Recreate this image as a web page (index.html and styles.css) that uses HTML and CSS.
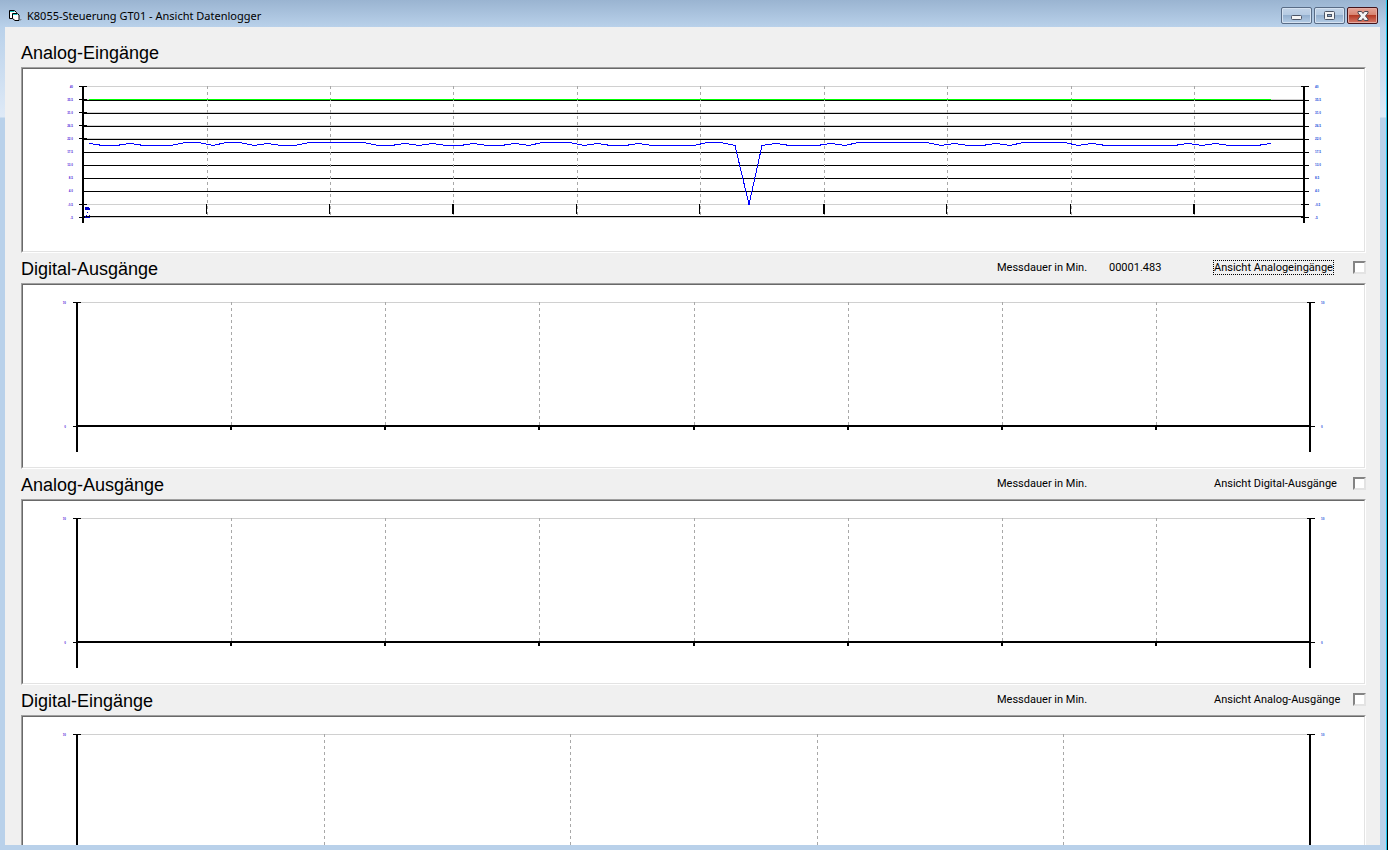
FILE: index.html
```
<!DOCTYPE html>
<html lang="de">
<head>
    <meta charset="UTF-8">
    <meta name="viewport" content="width=device-width, initial-scale=1.0">
    <title>K8055-Steuerung GT01 - Ansicht Datenlogger</title>
    <link rel="stylesheet" href="styles.css">
</head>
<body>
    <div class="window">
        <!-- Title Bar -->
        <header class="titlebar">
            <svg class="app-icon" viewBox="0 0 13 12" width="13" height="12" aria-hidden="true">
                <path d="M.5 8.500V.5h5l2 2v6z" fill="#fff" stroke="#000"/>
                <path d="M1 1h4l1 1H1z" fill="#19c5c5"/>
                <path d="M3.500 8.500v-5h5l1.500 1.500v5.500h-4z" fill="#fff" stroke="#000"/>
                <path d="M4 4h4l1 1H4z" fill="#19c5c5"/>
                <path d="M11 9h2l-2 2z" fill="#7c8794"/>
            </svg>
            <span class="caption">K8055-Steuerung GT01 - Ansicht Datenlogger</span>
            <button class="winbtn minimize" aria-label="Minimieren">
                <svg viewBox="0 0 11 5" width="11" height="5"><rect x=".5" y=".5" width="10" height="4" rx="1" fill="#f4f4f4" stroke="#4c5566"/></svg>
            </button>
            <button class="winbtn" aria-label="Maximieren">
                <svg viewBox="0 0 11 9" width="11" height="9"><rect x=".5" y=".5" width="10" height="8" rx="1" fill="#f4f4f4" stroke="#4c5566"/><rect x="3.5" y="3.5" width="4" height="2" fill="#8fabc9" stroke="#4c5566"/></svg>
            </button>
            <button class="winbtn close" aria-label="Schließen">
                <svg viewBox="0 0 12 10" width="12" height="10"><path d="M1 .5h3.500L6 2.500 7.500 .5H11V2L8.500 5 11 8v1.500H7.500L6 7.500 4.500 9.500H1V8l2.500-3L1 2z" fill="#f4f4f4" stroke="#4b4650"/></svg>
            </button>
        </header>

        <!-- Logger Charts -->
        <main class="client">
            <section>
                <div class="head">
                    <h2>Analog-Eingänge</h2>
                </div>
                <div class="panel"><svg id="analog-in" class="chart" viewBox="0 0 1341 182"></svg></div>
            </section>
            <section>
                <div class="head">
                    <h2>Digital-Ausgänge</h2>
                    <span>Messdauer in Min.</span>
                    <output>00001.483</output>
                    <label class="check"><span class="focused">Ansicht Analogeingänge</span><input type="checkbox"></label>
                </div>
                <div class="panel"><svg id="digital-out" class="chart" viewBox="0 0 1341 182"></svg></div>
            </section>
            <section>
                <div class="head">
                    <h2>Analog-Ausgänge</h2>
                    <span>Messdauer in Min.</span>
                    <output></output>
                    <label class="check"><span>Ansicht Digital-Ausgänge</span><input type="checkbox"></label>
                </div>
                <div class="panel"><svg id="analog-out" class="chart" viewBox="0 0 1341 182"></svg></div>
            </section>
            <section>
                <div class="head">
                    <h2>Digital-Eingänge</h2>
                    <span>Messdauer in Min.</span>
                    <output></output>
                    <label class="check"><span>Ansicht Analog-Ausgänge</span><input type="checkbox"></label>
                </div>
                <div class="panel"><svg id="digital-in" class="chart" viewBox="0 0 1341 182"></svg></div>
            </section>
        </main>
    </div>

    <script>
        const SVG_NS = "http://www.w3.org/2000/svg";

        function add(svg, name, attrs, text) {
            const el = document.createElementNS(SVG_NS, name);
            for (const key in attrs) el.setAttribute(key, attrs[key]);
            if (text) el.textContent = text;
            svg.appendChild(el);
        }

        function bar(svg, x, y, width, height, cls) {
            add(svg, "rect", { x, y, width, height, class: cls || "ink" });
        }

        // Dashed time marker
        function marker(svg, x, top, bottom) {
            add(svg, "path", { d: `M${x + 0.5} ${top}V${bottom}`, class: "marker" });
        }

        // Axis label on both sides
        function label(svg, left, right, y, value) {
            add(svg, "text", { x: left, y: y + 2, class: "scale left" }, value);
            add(svg, "text", { x: right, y: y + 2, class: "scale" }, value);
        }

        // Empty chart with the same axis on each side
        function drawEmpty(id, columns, labels) {
            const svg = document.getElementById(id);
            bar(svg, 54, 17, 1233, 1, "grid");
            columns.forEach(x => {
                marker(svg, x, 17, 140);
                bar(svg, x - 1, 141, 2, 4);
            });
            bar(svg, 54, 140, 1233, 2);
            [53, 1286].forEach(x => bar(svg, x, 17, 2, 150));
            bar(svg, 50, 17, 8, 1);
            bar(svg, 1284, 17, 8, 1);
            bar(svg, 50, 141, 4, 1);
            bar(svg, 1286, 141, 6, 1);
            labels.forEach((value, i) => label(svg, 43, 1298, i ? 141 : 17, value));
        }

        // Analog inputs
        const rows = [17, 30, 43, 56, 69, 82, 95, 108, 121, 135, 148];
        const values = ["40", "35.5", "31.0", "26.5", "22.0", "17.5", "13.0", "8.5", "4.0", "-0.5", "-5"];
        const columns = [184, 307, 430, 554, 677, 801, 924, 1048, 1171];
        const samples = [
            74, 76, 76, 74, 76, 76, 76, 73, 73, 76, 73, 73, 76, 74, 76, 76, 73, 73, 73, 73,
            73, 76, 76, 74, 76, 74, 76, 76, 74, 76, 76, 74, 76, 73, 73, 73, 76, 74, 76, 76,
            74, 76, 76, 76, 76, 73, 73, 76, 135, 76, 74, 76, 76, 76, 74, 76, 73, 73, 73, 73,
            73, 73, 76, 74, 76, 76, 74, 76, 73, 73, 73, 73, 76, 74, 76, 76, 76, 76, 76, 76,
            74, 76, 74, 76, 76, 76, 74
        ];

        function drawAnalogIn() {
            const svg = document.getElementById("analog-in");
            rows.forEach((y, i) => {
                if (i < 5 || i > 8) bar(svg, 60, y, 1221, 1, "grid");
                if (i > 0 && i < 9) bar(svg, 60, i < 5 ? y + 1 : y + 1, 1226, 1);
            });
            bar(svg, 60, 147, 1221, 1);
            columns.forEach((x, i) => {
                marker(svg, x, 17, 149);
                bar(svg, x - 1, 135, i % 3 === 2 ? 2 : 1, 10);
            });
            bar(svg, 66, 30, 1182, 1, "digital");

            const points = samples.map((y, i) => `${66 + Math.round(i * 13.74)},${y + 0.5}`);
            add(svg, "polyline", { points: points.join(" "), class: "trace" });

            bar(svg, 59, 17, 2, 137);
            bar(svg, 1280, 17, 2, 137);
            rows.forEach((y, i) => {
                if (i < 5 || i > 8) bar(svg, 56, y, 8, 1);
                if (i === 0 || i > 8) bar(svg, 1278, y, 8, 1);
                label(svg, 50, 1292, y, values[i]);
            });

            // Channel marks at the origin
            add(svg, "path", { d: "M62 138h4v1h1v2h-5zM64 143h1v1h-1zM63 146h1v1h-1zM66 146h1v1h-1zM62 147h1v2h-1zM62 148h5v1h-5z", class: "mark" });
        }

        drawAnalogIn();
        drawEmpty("digital-out", [208, 362, 516, 671, 825, 979, 1133], ["10", "0"]);
        drawEmpty("analog-out", [208, 362, 516, 671, 825, 979, 1133], ["10", "0"]);
        drawEmpty("digital-in", [301, 547, 794, 1040], ["10"]);
    </script>
</body>
</html>
```
FILE: styles.css
```
/* Global Styles */
* {
    box-sizing: border-box;
}
body {
    margin: 0;
    height: 100vh;
    overflow: hidden;
    background-color: #000;
    font-family: Roboto, Arial, sans-serif;
    font-size: 11px;
    color: #000;
}
/* Window Frame */
.window {
    display: flex;
    flex-direction: column;
    height: 100vh;
    margin-right: 1px;
    padding: 0 6px 5px 5px;
    border-right: 1px solid #1ec8f0;
    background: linear-gradient(#9ab4d1 0, #b9d1ea 27px, #dfeaf7 117px, #b9d1ea 118px);
}
.titlebar {
    display: flex;
    flex: none;
    align-items: center;
    gap: 2px;
    height: 27px;
    padding: 4px 2px 0 4px;
}
.caption {
    flex: 1;
    padding-left: 3px;
    font-family: "Noto Sans", sans-serif;
    font-size: 11px;
}
.winbtn {
    display: flex;
    align-items: center;
    justify-content: center;
    width: 31px;
    height: 17px;
    padding: 0;
    border: 1px solid #596c86;
    border-radius: 2px;
    background: linear-gradient(#c3d4e8 0, #b4cae2 48%, #94b0cf 50%, #b5cde6 100%);
    box-shadow: inset 0 0 0 1px #d5e2f1;
}
.winbtn.minimize {
    padding-top: 4px;
}
.winbtn.close {
    border-color: #43141b;
    background: linear-gradient(#e5a598 0, #d88471 45%, #b43a24 50%, #d5796a 100%);
    box-shadow: inset 0 0 0 1px #e5aba2;
}
/* Client Area */
.client {
    flex: 1;
    min-height: 0;
    padding: 10px 14px 0 16px;
    overflow: hidden;
    background-color: #f0f0f0;
}
.head {
    display: grid;
    grid-template-columns: 1fr 112px 105px 152px;
    align-items: center;
    height: 30px;
    padding-bottom: 2px;
}
.head h2 {
    margin: 0;
    padding-top: 4px;
    font-family: "Liberation Sans", Arial, sans-serif;
    font-size: 18px;
    font-weight: normal;
    line-height: 20px;
}
.check {
    display: flex;
    align-items: center;
    justify-content: space-between;
}
.focused {
    outline: 1px dotted #000;
}
.check input {
    appearance: none;
    width: 13px;
    height: 13px;
    margin: 0;
    border: 2px solid;
    border-color: #848484 #e3e3e3 #e3e3e3 #848484;
    background-color: #fff;
}
/* Sunken Chart Panel */
.panel {
    border: 1px solid;
    border-color: #a0a0a0 #fff #fff #a0a0a0;
}
.chart {
    display: block;
    width: 100%;
    border: 1px solid;
    border-color: #696969 #e3e3e3 #e3e3e3 #696969;
    background-color: #fff;
    shape-rendering: crispEdges;
}
.ink {
    fill: #000;
}
.grid {
    fill: #d0d0d0;
}
.digital {
    fill: #00ff00;
}
.mark {
    fill: #0000c8;
}
.marker {
    stroke: #a8a8a8;
    stroke-dasharray: 3 3;
}
.trace {
    fill: none;
    stroke: #0000ff;
}
.scale {
    font-family: "Liberation Sans", Arial, sans-serif;
    font-size: 3px;
    font-weight: bold;
    fill: #0a3cd8;
}
.scale.left {
    text-anchor: end;
    fill: #4a1ed8;
}
```
